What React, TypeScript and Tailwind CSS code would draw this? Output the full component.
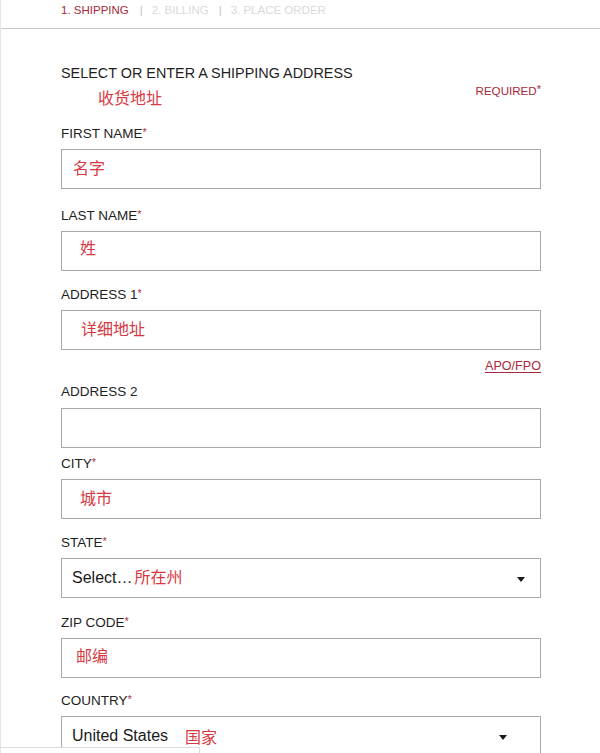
import React from "react";

const FONT = { fontFamily: '"Liberation Sans", Arial, "Noto Sans CJK SC", sans-serif' };

function Label({ text, star = true, className = "" }: { text: string; star?: boolean; className?: string }) {
  return (
    <div className={`text-[13.5px] leading-[16px] text-[#1e1e1e] ${className}`}>
      {text}
      {star && <span className="text-[#a8343f] text-[11px] relative -top-[2px]">*</span>}
    </div>
  );
}

function Box({ children, className = "" }: { children?: React.ReactNode; className?: string }) {
  return (
    <div className={`mt-[7px] h-[40px] border border-[#a9a9a9] bg-white flex items-center ${className}`}>
      {children}
    </div>
  );
}

function Ph({ text }: { text: string }) {
  return <span className="text-[16px] leading-[20px] text-[#d8383f]">{text}</span>;
}

function Caret() {
  return (
    <svg width="8" height="5" viewBox="0 0 8 5" className="mt-[3px]">
      <polygon points="0,0 8,0 4,5" fill="#1a1a1a" />
    </svg>
  );
}

export default function App() {
  return (
    <div style={FONT} className="relative min-h-screen w-[600px] bg-white border-l border-[#e4e4e4] overflow-hidden">
      <div className="h-[29px] border-b border-[#c8c8c8] flex items-start pt-[3px] pl-[60px] text-[11.5px] leading-[14px]">
        <span className="text-[#a8293a]">1. SHIPPING</span>
        <span className="text-[#c4c4c4] ml-[11px] mr-[9px]">|</span>
        <span className="text-[#dadada]">2. BILLING</span>
        <span className="text-[#c4c4c4] ml-[10px] mr-[9px]">|</span>
        <span className="text-[#dadada]">3. PLACE ORDER</span>
      </div>

      <div className="pl-[60px] w-[540px]">
        <div className="mt-[36px] text-[14.4px] leading-[17px] text-[#1e1e1e]">SELECT OR ENTER A SHIPPING ADDRESS</div>
        <div className="mt-[7px] h-[20px] flex justify-between">
          <span className="pl-[37px] text-[16px] leading-[20px] text-[#d8383f]">收货地址</span>
          <span className="-mt-[5px] text-[11.6px] leading-[14px] text-[#a8293a]">
            REQUIRED<span className="relative -top-[2px] text-[11px]">*</span>
          </span>
        </div>

        <Label text="FIRST NAME" className="mt-[17px]" />
        <Box className="pl-[11px]">
          <Ph text="名字" />
        </Box>

        <Label text="LAST NAME" className="mt-[19px]" />
        <Box className="pl-[18px] pb-[5px]">
          <Ph text="姓" />
        </Box>

        <Label text="ADDRESS 1" className="mt-[16px]" />
        <Box className="pl-[19px]">
          <Ph text="详细地址" />
        </Box>

        <div className="mt-[9px] text-right text-[12.6px] leading-[15px]">
          <span className="text-[#a8293a] underline underline-offset-[2px]">APO/FPO</span>
        </div>

        <Label text="ADDRESS 2" star={false} className="mt-[10px]" />
        <Box className="mt-[8px]" />

        <Label text="CITY" className="mt-[8px]" />
        <Box className="pl-[18px]">
          <Ph text="城市" />
        </Box>

        <Label text="STATE" className="mt-[16px]" />
        <Box className="pl-[10px] pr-[15px] justify-between">
          <span className="flex items-center">
            <span className="text-[16px] leading-[20px] text-[#1a1a1a]">Select…</span>
            <span className="ml-[2px]">
              <Ph text="所在州" />
            </span>
          </span>
          <Caret />
        </Box>

        <Label text="ZIP CODE" className="mt-[17px]" />
        <Box className="pl-[14px] pb-[2px]">
          <Ph text="邮编" />
        </Box>

        <Label text="COUNTRY" className="mt-[15px]" />
        <Box className="pl-[10px] pr-[33px] justify-between">
          <span className="flex items-center">
            <span className="text-[16px] leading-[20px] text-[#1a1a1a]">United States</span>
            <span className="ml-[17px] mt-[3px]">
              <Ph text="国家" />
            </span>
          </span>
          <Caret />
        </Box>
      </div>

      <div className="absolute left-0 top-[747px] w-[199px] h-[20px] bg-white border-t border-r border-[#dcdcdc]" />
    </div>
  );
}
